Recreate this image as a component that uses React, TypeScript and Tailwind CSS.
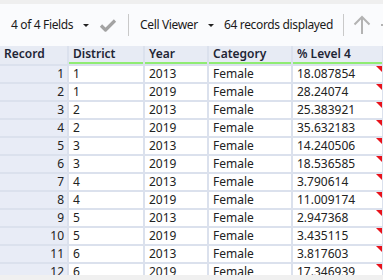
const ROWS: [number, string, string, string, string][] = [
  [1, '1', '2013', 'Female', '18.087854'],
  [2, '1', '2019', 'Female', '28.24074'],
  [3, '2', '2013', 'Female', '25.383921'],
  [4, '2', '2019', 'Female', '35.632183'],
  [5, '3', '2013', 'Female', '14.240506'],
  [6, '3', '2019', 'Female', '18.536585'],
  [7, '4', '2013', 'Female', '3.790614'],
  [8, '4', '2019', 'Female', '11.009174'],
  [9, '5', '2013', 'Female', '2.947368'],
  [10, '5', '2019', 'Female', '3.435115'],
  [11, '6', '2013', 'Female', '3.817603'],
  [12, '6', '2019', 'Female', '17.346939'],
]

function Caret() {
  return <span className="inline-block w-0 h-0 border-l-[3px] border-r-[3px] border-t-[3px] border-l-transparent border-r-transparent border-t-[#222]" />
}

function Toolbar() {
  return (
    <div className="h-[46px] bg-[#fafbfd] border-t-[4px] border-[#efefef] flex items-center text-[12px] tracking-[-0.35px] text-[#1a1a1a] whitespace-nowrap">
      <span className="ml-[11px] w-[63px] shrink-0">4 of 4 Fields</span>
      <span className="ml-[9px] mt-[1px] flex shrink-0"><Caret /></span>
      <svg className="ml-[10px] shrink-0" width="18" height="14" viewBox="0 0 18 14">
        <path d="M2 7.5 L6.5 12 L16 2.5" fill="none" stroke="#a3a3a3" strokeWidth="3.2" strokeLinejoin="round" />
      </svg>
      <span className="ml-[11px] w-px h-[22px] bg-[#c9c9c9] shrink-0" />
      <span className="ml-[11px] w-[63px] shrink-0">Cell Viewer</span>
      <span className="ml-[5px] mt-[1px] flex shrink-0"><Caret /></span>
      <span className="ml-[10px] w-[106px] shrink-0">64 records displayed</span>
      <span className="ml-[13px] w-px h-[22px] bg-[#c9c9c9] shrink-0" />
      <svg className="ml-[9px] shrink-0" width="18" height="20" viewBox="0 0 18 20">
        <path d="M9 19 V2 M1.5 9.5 L9 2 L16.5 9.5" fill="none" stroke="#b3b3b3" strokeWidth="2" />
      </svg>
      <span className="ml-[10px] w-[4px] h-[2px] bg-[#b3b3b3] shrink-0" />
    </div>
  )
}

export default function App() {
  const head = 'h-[18px] bg-[#e7ebf4] font-semibold text-[12px] text-[#1e2535] leading-[16px] pl-[4px]'
  const cell = 'h-[16px] bg-white text-[12px] text-[#222] leading-[16px] pl-[4px]'
  return (
    <div className="w-[383px] h-[280px] overflow-hidden bg-white" style={{ fontFamily: '"Noto Sans", "Open Sans", sans-serif' }}>
      <Toolbar />
      <div className="h-[229px] overflow-hidden bg-[#dbe1ed] pr-[1px]">
        <div className="grid grid-cols-[67px_74px_62px_82px_89px] gap-[2px]">
          <div className={head}>Record</div>
          <div className={`${head} border-b-2 border-[#90ec73]`}>District</div>
          <div className={`${head} border-b-2 border-[#90ec73]`}>Year</div>
          <div className={`${head} border-b-2 border-[#90ec73]`}>Category</div>
          <div className={`${head} border-b-2 border-[#90ec73]`}>% Level 4</div>
          {ROWS.map(([n, d, y, c, v]) => (
            <div key={n} className="contents">
              <div className="h-[16px] bg-[#e8ecf6] text-[12px] text-[#222] leading-[16px] text-right pr-[3px]">{n}</div>
              <div className={cell}>{d}</div>
              <div className={cell}>{y}</div>
              <div className={cell}>{c}</div>
              <div className={`${cell} relative`}>
                {v}
                <span className="absolute top-0 right-0 w-0 h-0 border-t-[6px] border-l-[6px] border-t-[#e8121b] border-l-transparent" />
              </div>
            </div>
          ))}
        </div>
      </div>
      <div className="h-[5px] bg-[#f0f0f0]" />
    </div>
  )
}
